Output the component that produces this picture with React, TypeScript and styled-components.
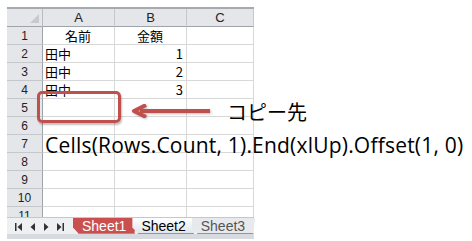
import styled, { createGlobalStyle } from 'styled-components'

const GlobalStyle = createGlobalStyle`
  body {
    margin: 0;
    background: #ffffff;
    font-family: 'Noto Sans CJK JP', sans-serif;
  }
`

const rows: [string, string][] = [
  ['名前', '金額'],
  ['田中', '1'],
  ['田中', '2'],
  ['田中', '3'],
  ['', ''],
  ['', ''],
  ['', ''],
  ['', ''],
  ['', ''],
  ['', ''],
]

const NavIcon = ({ dir, bar }: { dir: 'left' | 'right'; bar?: boolean }) => (
  <svg width="7" height="8" viewBox="0 0 7 8">
    {dir === 'left' ? (
      <>
        {bar && <rect x="0" y="0" width="1.5" height="8" fill="#333" />}
        <path d={bar ? 'M7 0 L2.5 4 L7 8 Z' : 'M6 0 L1.5 4 L6 8 Z'} fill="#333" />
      </>
    ) : (
      <>
        <path d={bar ? 'M0 0 L4.5 4 L0 8 Z' : 'M1 0 L5.5 4 L1 8 Z'} fill="#333" />
        {bar && <rect x="5.5" y="0" width="1.5" height="8" fill="#333" />}
      </>
    )}
  </svg>
)

const App = () => (
  <>
    <GlobalStyle />
    <Page>
      <Sheet>
        <Grid>
          <Corner />
          <ColHead>A</ColHead>
          <ColHead>B</ColHead>
          <ColHead>C</ColHead>
          {rows.map(([a, b], i) => (
            <Row key={i}>
              <RowHead>{i + 1}</RowHead>
              <Cell align={i === 0 ? 'center' : 'left'}>{a}</Cell>
              <Cell align={i === 0 ? 'center' : 'right'}>{b}</Cell>
              <Cell />
            </Row>
          ))}
          <Row>
            <RowHead>11</RowHead>
            <Cell />
            <Cell />
            <Cell />
          </Row>
        </Grid>
        <TabBar>
          <NavButtons>
            <NavIcon dir="left" bar />
            <NavIcon dir="left" />
            <NavIcon dir="right" />
            <NavIcon dir="right" bar />
          </NavButtons>
          <Tab variant="red">Sheet1</Tab>
          <Tab variant="active">Sheet2</Tab>
          <Tab variant="plain">Sheet3</Tab>
        </TabBar>
        <BottomBar />
        <Highlight />
        <Arrow width="80" height="14" viewBox="0 0 80 14">
          <path d="M78 7 H8" stroke="#c0504d" strokeWidth="4" fill="none" />
          <path d="M14 1 L2 7 L14 13" stroke="#c0504d" strokeWidth="4" fill="none" strokeLinejoin="round" />
        </Arrow>
        <Label>コピー先</Label>
        <Code>Cells(Rows.Count, 1).End(xlUp).Offset(1, 0)</Code>
      </Sheet>
    </Page>
  </>
)

export default App

const Page = styled.div`
  padding: 7px 0 0 7px;
`

const Sheet = styled.div`
  position: relative;
  width: 247px;
`

const Grid = styled.div`
  display: grid;
  grid-template-columns: 36px 72px 72px 67px;
  grid-auto-rows: 18px;
  height: 208px;
  overflow: hidden;
  border-top: 2px solid #a6aab0;
`

const Row = styled.div`
  display: contents;
`

const Corner = styled.div`
  position: relative;
  background: #e4e6ea;
  border-right: 1px solid #b8bcc2;
  border-bottom: 1px solid #9ea3aa;
  &::after {
    content: '';
    position: absolute;
    right: 3px;
    bottom: 3px;
    border-left: 9px solid transparent;
    border-bottom: 9px solid #c6c9ce;
  }
`

const ColHead = styled.div`
  display: flex;
  align-items: center;
  justify-content: center;
  background: #e4e6ea;
  border-right: 1px solid #c4c8cd;
  border-bottom: 1px solid #9ea3aa;
  font-family: 'Liberation Sans', sans-serif;
  font-size: 13px;
  color: #222;
`

const RowHead = styled.div`
  display: flex;
  align-items: center;
  justify-content: center;
  background: #e4e6ea;
  border-right: 1px solid #9ea3aa;
  border-bottom: 1px solid #c4c8cd;
  font-family: 'Liberation Sans', sans-serif;
  font-size: 12px;
  color: #222;
`

const Cell = styled.div<{ align?: 'left' | 'right' | 'center' }>`
  display: flex;
  align-items: center;
  justify-content: ${({ align }) =>
    align === 'right' ? 'flex-end' : align === 'center' ? 'center' : 'flex-start'};
  padding: 0 3px 0 2px;
  border-right: 1px solid #d8d8d8;
  border-bottom: 1px solid #d8d8d8;
  font-size: 13px;
  color: #000;
  white-space: nowrap;
`

const TabBar = styled.div`
  display: flex;
  align-items: flex-end;
  height: 16px;
  background: #eef0f2;
  border-top: 1px solid #c4c8cd;
`

const NavButtons = styled.div`
  display: flex;
  align-items: center;
  gap: 7px;
  width: 66px;
  box-sizing: border-box;
  height: 15px;
  padding-left: 8px;
`

const tabColors = {
  red: { bg: '#c9504f', fg: '#ffffff' },
  active: { bg: 'linear-gradient(#ffffff, #dfe6ee)', fg: '#000000' },
  plain: { bg: '#e7e9ec', fg: '#555555' },
}

const Tab = styled.div<{ variant: 'red' | 'active' | 'plain' }>`
  display: flex;
  align-items: center;
  height: 15px;
  padding: 0 10px 0 9px;
  margin-right: -4px;
  clip-path: polygon(0 0, 100% 0, calc(100% - 2px) 100%, 6px 100%, 0 60%);
  background: ${({ variant }) => tabColors[variant].bg};
  color: ${({ variant }) => tabColors[variant].fg};
  font-family: 'Liberation Sans', sans-serif;
  font-size: 14px;
  border-bottom: 1px solid #8d96a3;
`

const BottomBar = styled.div`
  height: 5px;
  background: #d7dadf;
`

const Highlight = styled.div`
  position: absolute;
  left: 30px;
  top: 84px;
  width: 78px;
  height: 26px;
  border: 3px solid #c0504d;
  border-radius: 5px;
  box-shadow: 1px 2px 2px rgba(0, 0, 0, 0.25);
`

const Arrow = styled.svg`
  position: absolute;
  left: 125px;
  top: 97px;
  filter: drop-shadow(1px 1px 1px rgba(0, 0, 0, 0.25));
`

const Label = styled.div`
  position: absolute;
  left: 220px;
  top: 90px;
  font-size: 20px;
  color: #000;
  white-space: nowrap;
`

const Code = styled.div`
  position: absolute;
  left: 38px;
  top: 124px;
  font-family: 'Open Sans', sans-serif;
  font-size: 21px;
  letter-spacing: 0.2px;
  color: #000;
  white-space: nowrap;
`
